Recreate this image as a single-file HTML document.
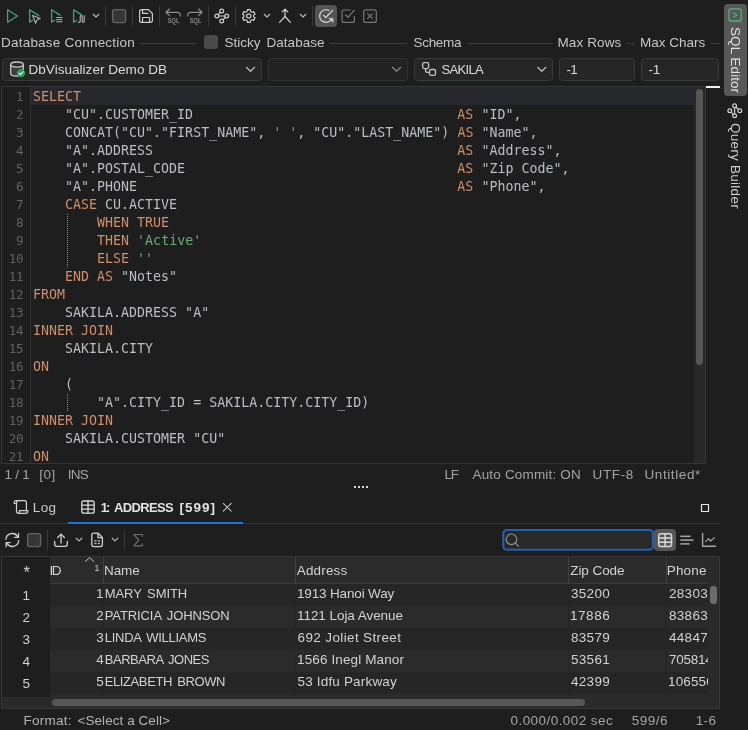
<!DOCTYPE html>
<html><head><meta charset="utf-8">
<style>
*{box-sizing:border-box;margin:0;padding:0}
html,body{width:748px;height:730px;overflow:hidden;background:#1e1e1e;color:#d0d0d0;font-family:"Liberation Sans",sans-serif;font-size:13px}
.abs{position:absolute}
#root{will-change:transform;position:relative;width:748px;height:730px;overflow:hidden;background:#1e1e1e}
.t{position:absolute;white-space:pre;line-height:16px;color:#c8c8c8;font-size:13.500px}
.sepv{position:absolute;width:1px;background:#3a3a3a;top:6px;height:20px}
.lline{position:absolute;height:1px;background:#3c3c3c;top:43px}
.combo{position:absolute;top:58px;height:23px;border:1px solid #3a3a3a;border-radius:3.500px;background:#262626}
#sidebar{position:absolute;left:722px;top:0;width:26px;height:730px}
.vt{position:absolute;writing-mode:vertical-rl;white-space:pre;font-size:14px;color:#d0d0d0;line-height:16px}
#editor{position:absolute;left:1px;top:86px;width:705px;height:378px;background:#1e1e1e;overflow:hidden;border:1px solid #363636}
#gutter{position:absolute;left:0;top:0;width:29px;height:377px;background:#1e1e1e;border-right:1px solid #323232}
pre{font-family:"DejaVu Sans Mono","Liberation Mono",monospace;font-size:13.288px;line-height:18px;position:absolute;white-space:pre}
#ln{left:0;top:1px;width:21.100px;text-align:right;color:#606265;font-size:12.500px;letter-spacing:-0.350px}
#code{left:31px;top:1px;color:#bcbec4;letter-spacing:0.020px}
.gt{position:absolute;white-space:pre;line-height:16px;color:#d4d4d4;font-size:13.500px}
.k{color:#cf8e6d}.s{color:#6aab73}
</style></head><body><div id="root">

<!-- TOOLBAR -->
<div id="toolbar"><svg class="abs" style="left:0;top:0" width="400" height="32" viewBox="0 0 400 32" fill="none" stroke-linecap="round" stroke-linejoin="round">
<g stroke="#44a572" stroke-width="1.3">
<path d="M7.6 9.8 L17.4 16 L7.6 22.2 Z"/>
<path d="M32.400 20.400 L29.600 22.200 L29.600 9.800 L38.800 15.600"/>
<path d="M54.600 20.300 L51.600 22.200 L51.600 9.800 L60 15.100"/>
<path d="M76.600 20.300 L73.600 22.200 L73.600 9.800 L81.600 14.900"/>
</g>
<path d="M32.6 15.6 L40.2 18.6 L36.9 19.9 L35.6 23.2 Z" stroke="#b4b4b4" stroke-width="1.1"/>
<g stroke="#b0b0b0" stroke-width="1" stroke-linecap="butt"><path d="M56.200 17.500 H62.400"/><path d="M56.200 19.650 H62.400"/><path d="M56.200 21.800 H62.400"/></g>
<path d="M78.3 22.3 H79.3 Q80.2 22.3 80.2 21.2 V16.8 Q80.2 15.7 81.2 15.7 Q82.2 15.7 82.2 16.8 V21.2 Q82.2 22.3 83.2 22.3 Q84.2 22.3 84.2 21.2 V15.5" stroke="#a8a8a8" stroke-width="1.2"/>
<path d="M93.2 14.3 L96 17 L98.8 14.3" stroke="#b4b4b4" stroke-width="1.2"/>
<g stroke="#3a3a3a" stroke-width="1"><path d="M105.5 6 V26"/><path d="M132.5 6 V26"/><path d="M159.5 6 V26"/><path d="M208.5 6 V26"/><path d="M235.5 6 V26"/><path d="M312.5 6 V26"/></g>
<rect x="112.6" y="9.6" width="13" height="13" rx="2" fill="#363636" stroke="#626262" stroke-width="1.4"/>
<g stroke="#cccccc" stroke-width="1.2">
<path d="M141.5 9.6 H148.5 L152.4 13.5 V20.5 Q152.4 22.4 150.5 22.4 H141.5 Q139.6 22.4 139.6 20.5 V11.5 Q139.6 9.6 141.5 9.6 Z"/>
<path d="M142.5 9.8 V13.4 H148 "/>
<path d="M142.5 22.2 V17.5 H149.5 V22.2"/>
</g>
<g stroke="#8c8c8c" stroke-width="1.2">
<path d="M169.5 9 L166 12.3 L169.5 15.6"/><path d="M166.3 12.3 H177 Q180.3 12.3 180.3 15.5 V16"/>
<path d="M198.5 9 L202 12.3 L198.5 15.6"/><path d="M201.7 12.3 H191 Q187.7 12.3 187.7 15.5 V16"/>
</g>
<g fill="#8c8c8c" stroke="none" font-family="Liberation Sans, sans-serif" font-size="7.600" font-weight="bold"><text x="167.800" y="22.900" textLength="11.600" lengthAdjust="spacingAndGlyphs">SQL</text><text x="189.800" y="22.900" textLength="11.600" lengthAdjust="spacingAndGlyphs">SQL</text></g>
<g stroke="#d0d0d0" stroke-width="1.2">
<circle cx="221.7" cy="11" r="1.9"/><circle cx="216.9" cy="16" r="1.9"/><circle cx="226.7" cy="16" r="1.9"/><circle cx="221.7" cy="21" r="1.9"/>
<path d="M218.8 16 H224.8"/><path d="M218.2 14.6 L220.3 12.4"/><path d="M225.4 17.4 L223.1 19.6"/>
</g>
<g stroke="#d0d0d0" stroke-width="1.2">
<circle cx="248.8" cy="16" r="2.1"/>
<path d="M247.18 11.27 L247.42 9.54 L250.18 9.54 L250.42 11.27 L252.09 12.23 L253.70 11.58 L255.08 13.96 L253.71 15.04 L253.71 16.96 L255.08 18.04 L253.70 20.42 L252.09 19.77 L250.42 20.73 L250.18 22.46 L247.42 22.46 L247.18 20.73 L245.51 19.77 L243.90 20.42 L242.52 18.04 L243.89 16.96 L243.89 15.04 L242.52 13.96 L243.90 11.58 L245.51 12.23 Z"/>
</g>
<path d="M264.2 14.3 L267 17 L269.8 14.3" stroke="#b4b4b4" stroke-width="1.2"/>
<g stroke="#d0d0d0" stroke-width="1.2"><path d="M282.200 11.900 L285 9.200 L287.800 11.900"/><path d="M285 9.5 V16.5"/><path d="M279.6 22.4 L285 16.5 L290.4 22.4"/></g>
<path d="M300.2 14.3 L303 17 L305.8 14.3" stroke="#b4b4b4" stroke-width="1.2"/>
<rect x="315" y="5" width="22" height="22" rx="3.500" fill="#555555"/>
<g stroke="#d6d6d6" stroke-width="1.2">
<path d="M328.700 10.400 A6.300 6.300 0 1 0 330.600 20.300"/>
<path d="M323.600 15.400 L325.800 17.500 L332.800 10.200"/>
</g>
<path d="M328.800 18.200 L333.100 18.200 L333.100 22.500 Z" fill="#d4d4d4" stroke="#d4d4d4" stroke-width="0.300"/>
<g stroke="#777777" stroke-width="1.2">
<path d="M354.4 16.5 V20.4 Q354.4 22.4 352.4 22.4 H344 Q342 22.4 342 20.4 V12 Q342 10 344 10 H350.5"/>
<path d="M345.6 15 L348 17.3 L354.3 10.2"/>
<rect x="363.7" y="9.8" width="12.6" height="12.6" rx="2"/>
<path d="M367.7 13.8 L372.3 18.4"/><path d="M372.3 13.8 L367.7 18.4"/>
</g>
</svg></div>

<!-- LABEL ROW -->
<div class="lline" style="left:139px;width:58px"></div>
<div class="abs" style="left:204px;top:35px;width:14px;height:14px;background:#4a4a4a;border-radius:3px"></div>
<div class="lline" style="left:329px;width:78px"></div>
<div class="lline" style="left:467px;width:86px"></div>
<div class="lline" style="left:626px;width:9px"></div>
<div class="lline" style="left:711px;width:9px"></div>

<!-- COMBOS -->
<div class="combo" style="left:2px;width:260px"></div>
<div class="combo" style="left:268px;width:140px;background:#222222;border-color:#333333"></div>
<div class="combo" style="left:414px;width:139px"></div>
<div class="combo" style="left:559px;width:76px"></div>
<div class="combo" style="left:641px;width:78px"></div>
<svg class="abs" style="left:0;top:56px" width="722" height="28" viewBox="0 56 722 28" fill="none" stroke-linecap="round" stroke-linejoin="round">
<path d="M10.700 64.600 V73.400 A6.300 2.600 0 0 0 23.300 73.400 V64.600" fill="#3a3a3a" stroke="#c4c4c4" stroke-width="1.3"/>
<ellipse cx="17" cy="64.600" rx="6.300" ry="2.600" fill="#2e2e2e" stroke="#c4c4c4" stroke-width="1.3"/>
<circle cx="21" cy="73.100" r="4.200" fill="#1fa055"/>
<path d="M18.900 73.200 L20.400 74.700 L23.100 71.800" stroke="#ffffff" stroke-width="1.2"/>
<g stroke="#bdbdbd" stroke-width="1.2">
<path d="M246.400 67.300 L250.500 71.300 L254.600 67.300"/>
<path d="M392.400 67.300 L396.500 71.300 L400.600 67.300" stroke="#8a8a8a"/>
<path d="M537.700 67.300 L541.800 71.300 L545.900 67.300"/>
</g>
<g stroke="#c4c4c4" stroke-width="1.3">
<rect x="422.700" y="62.700" width="5.900" height="5.900" rx="1.500"/>
<rect x="429.600" y="69.500" width="5.900" height="5.900" rx="1.500"/>
<path d="M425.600 68.800 V70.400 Q425.600 72.400 427.600 72.400 H429.400"/>
</g>
</svg>
<div class="t" style="left:1.00px;top:34.50px;color:#c6c6c6;letter-spacing:0.218px">Database Connection</div>
<div class="t" style="left:224.50px;top:34.50px;color:#c6c6c6;letter-spacing:-0.001px">Sticky</div>
<div class="t" style="left:266.50px;top:34.50px;color:#c6c6c6;letter-spacing:0.031px">Database</div>
<div class="t" style="left:413.50px;top:34.50px;color:#c6c6c6;letter-spacing:-0.303px">Schema</div>
<div class="t" style="left:557.50px;top:34.50px;color:#c6c6c6;letter-spacing:0.106px">Max Rows</div>
<div class="t" style="left:640.00px;top:34.50px;color:#c6c6c6;letter-spacing:-0.002px">Max Chars</div>
<div class="t" style="left:28.50px;top:61.50px;color:#dadada;letter-spacing:0.037px">DbVisualizer Demo DB</div>
<div class="t" style="left:441.50px;top:61.50px;color:#dadada;letter-spacing:-0.671px;font-size:13px">SAKILA</div>
<div class="t" style="left:566.50px;top:61.50px;color:#dadada;letter-spacing:-0.746px">-1</div>
<div class="t" style="left:648.50px;top:61.50px;color:#dadada;letter-spacing:-0.246px">-1</div>
<div class="t" style="left:4.50px;top:466.50px;color:#a4a4a4;letter-spacing:-0.253px">1 / 1</div>
<div class="t" style="left:39.25px;top:466.50px;color:#a4a4a4;letter-spacing:0.496px">[0]</div>
<div class="t" style="left:67.75px;top:466.50px;color:#a4a4a4;letter-spacing:-0.750px">INS</div>
<div class="t" style="left:444.50px;top:466.50px;color:#a4a4a4;letter-spacing:-1.258px">LF</div>
<div class="t" style="left:472.50px;top:466.50px;color:#a4a4a4;letter-spacing:0.177px">Auto Commit: ON</div>
<div class="t" style="left:592.50px;top:466.50px;color:#a4a4a4;letter-spacing:0.628px">UTF-8</div>
<div class="t" style="left:644.50px;top:466.50px;color:#a4a4a4;letter-spacing:0.591px">Untitled*</div>
<div class="t" style="left:32.75px;top:499.50px;color:#cccccc;letter-spacing:0.367px">Log</div>
<div class="t" style="left:100.80px;top:499.50px;color:#e2e2e2;letter-spacing:-2.030px;font-weight:bold;font-size:13px">1:</div>
<div class="t" style="left:113.90px;top:499.50px;color:#e2e2e2;letter-spacing:-0.616px;font-weight:bold;font-size:13px">ADDRESS</div>
<div class="t" style="left:179.50px;top:499.50px;color:#e2e2e2;letter-spacing:0.995px;font-weight:bold">[599]</div>
<div class="t" style="left:23.50px;top:712.50px;color:#b4b4b4;letter-spacing:0.249px">Format:</div>
<div class="t" style="left:77.50px;top:712.50px;color:#b4b4b4;letter-spacing:0.059px">&lt;Select a Cell&gt;</div>
<div class="t" style="left:510.50px;top:712.50px;color:#a4a4a4;letter-spacing:0.441px">0.000/0.002 sec</div>
<div class="t" style="left:631.75px;top:712.50px;color:#a4a4a4;letter-spacing:0.494px">599/6</div>
<div class="t" style="left:695.70px;top:712.50px;color:#a4a4a4;letter-spacing:0.348px">1-6</div>
<!-- EDITOR -->
<div id="editor">
<div class="abs" style="left:28px;top:0;width:664px;height:18px;background:#26282e"></div>
<div class="abs" style="left:692px;top:0;width:11px;height:376px;background:#282828"></div>
<div class="abs" style="left:694px;top:1.500px;width:7px;height:276.500px;background:#555555;border-radius:3.500px"></div>
<div id="gutter"></div>
<div class="abs" style="left:65px;top:127px;width:1px;height:54px;background:repeating-linear-gradient(to bottom,#8c8c8c 0,#8c8c8c 1px,transparent 1px,transparent 2px)"></div>
<div class="abs" style="left:65px;top:307px;width:1px;height:18px;background:repeating-linear-gradient(to bottom,#8c8c8c 0,#8c8c8c 1px,transparent 1px,transparent 2px)"></div>
<pre id="ln">1
2
3
4
5
6
7
8
9
10
11
12
13
14
15
16
17
18
19
20
21</pre>
<pre id="code"><span class="k">SELECT</span>
    "CU".CUSTOMER_ID                                 <span class="k">AS</span> "ID",
    CONCAT("CU"."FIRST_NAME", <span class="s">' '</span>, "CU"."LAST_NAME") <span class="k">AS</span> "Name",
    "A".ADDRESS                                      <span class="k">AS</span> "Address",
    "A".POSTAL_CODE                                  <span class="k">AS</span> "Zip Code",
    "A".PHONE                                        <span class="k">AS</span> "Phone",
    <span class="k">CASE</span> CU.ACTIVE
        <span class="k">WHEN TRUE</span>
        <span class="k">THEN</span> <span class="s">'Active'</span>
        <span class="k">ELSE</span> <span class="s">''</span>
    <span class="k">END AS</span> "Notes"
<span class="k">FROM</span>
    SAKILA.ADDRESS "A"
<span class="k">INNER JOIN</span>
    SAKILA.CITY
<span class="k">ON</span>
    (
        "A".CITY_ID = SAKILA.CITY.CITY_ID)
<span class="k">INNER JOIN</span>
    SAKILA.CUSTOMER "CU"
<span class="k">ON</span></pre>
</div>

<div class="abs" style="left:706px;top:86px;width:14px;height:2px;background:#f0f0f0"></div>
<!-- SIDEBAR -->
<div class="abs" style="left:724px;top:4px;width:23px;height:92px;background:#585858;border-radius:4px"></div>
<svg class="abs" style="left:722px;top:0" width="26" height="125" viewBox="722 0 26 125" fill="none" stroke-linecap="round" stroke-linejoin="round">
<rect x="729" y="8.800" width="12.200" height="12.200" rx="2.200" stroke="#4fb27f" stroke-width="1.3"/>
<path d="M733.300 12.700 L736.900 15 L733.300 17.300" stroke="#4fb27f" stroke-width="1.2"/>
<g stroke="#d0d0d0" stroke-width="1.2">
<circle cx="734.600" cy="105.800" r="1.900"/><circle cx="729.800" cy="110.800" r="1.900"/><circle cx="739.800" cy="110.800" r="1.900"/><circle cx="734.600" cy="115.800" r="1.900"/>
<path d="M734.600 107.700 V113.900"/><path d="M738.500 109.400 L736 107.200"/><path d="M731.100 112.200 L733.300 114.400"/>
</g>
</svg>
<div class="t" id="vt1" style="left:743.200px;top:27.300px;transform-origin:0 0;transform:rotate(90deg);color:#e0e0e0;letter-spacing:0.060px">SQL Editor</div>
<div class="t" id="vt2" style="left:743.200px;top:122.600px;transform-origin:0 0;transform:rotate(90deg);color:#d0d0d0;letter-spacing:0.260px">Query Builder</div>

<!-- STATUS -->

<div class="abs" style="left:354px;top:486px;width:2px;height:2px;background:#dcdcdc"></div><div class="abs" style="left:358px;top:486px;width:2px;height:2px;background:#dcdcdc"></div><div class="abs" style="left:362px;top:486px;width:2px;height:2px;background:#dcdcdc"></div><div class="abs" style="left:366px;top:486px;width:2px;height:2px;background:#dcdcdc"></div>
<!-- TABS -->

<svg class="abs" style="left:0;top:495px" width="722" height="60" viewBox="0 495 722 60" fill="none" stroke-linecap="round" stroke-linejoin="round">
<g stroke="#d0d0d0" stroke-width="1.2">
<path d="M16.5 503.5 V502.5 Q16.500 500.600 18.400 500.600 H24.500 Q26.400 500.600 26.400 502.500 V510.700"/>
<path d="M16.500 503.500 H14.300 V502.600 Q14.300 500.600 16.400 500.600 H18.5"/>
<path d="M16.500 503.500 V511.200 Q16.500 513.300 18.500 513.300 H25.800 Q27.800 513.300 27.800 511.300 V510.700 H19.4 V511.4 Q19.4 513.3 18.2 513.3"/>
</g>
<g stroke="#d8d8d8" stroke-width="1.3">
<rect x="81.800" y="501" width="12.400" height="12.200" rx="2"/>
<path d="M88 501 V513.200"/><path d="M81.800 505.100 H94.200"/><path d="M81.800 509.200 H94.200"/>
</g>
<g stroke="#c0c0c0" stroke-width="1.1"><path d="M223.300 503.300 L231.200 511.200"/><path d="M231.200 503.300 L223.300 511.200"/></g>
<rect x="701.500" y="504.500" width="7" height="7" stroke="#e6e6e6" stroke-width="1.2"/>
<rect x="0" y="523" width="720" height="1" fill="#343434"/>
<rect x="68" y="522" width="175" height="2" fill="#1f70d0"/>
<!-- grid toolbar -->
<g stroke="#d0d0d0" stroke-width="1.3">
<path d="M5.900 539.300 A6.400 6.400 0 0 1 17.700 536.600"/><path d="M18.500 533.300 V537.300 H14.500"/>
<path d="M18.700 540.700 A6.400 6.400 0 0 1 6.900 543.400"/><path d="M6.100 546.700 V542.700 H10.100"/>
</g>
<rect x="27.600" y="533.600" width="13" height="13" rx="2" fill="#363636" stroke="#626262" stroke-width="1.4"/>
<path d="M47.500 530 V550" stroke="#3a3a3a"/><path d="M124.500 530 V550" stroke="#3a3a3a"/>
<g stroke="#d0d0d0" stroke-width="1.3">
<path d="M54.700 541.500 V544.300 Q54.700 546.300 56.700 546.300 H65.300 Q67.300 546.300 67.300 544.300 V541.500"/>
<path d="M61 543 V534.300"/><path d="M57.600 537.500 L61 534.100 L64.400 537.500"/>
</g>
<path d="M76.200 538.200 L79 540.900 L81.800 538.200" stroke="#b4b4b4" stroke-width="1.2"/>
<g stroke="#d0d0d0" stroke-width="1.3">
<path d="M93.800 533.200 H98.200 L102.400 537.400 V544.600 Q102.400 546.600 100.400 546.600 H93.800 Q91.800 546.600 91.800 544.600 V535.200 Q91.800 533.200 93.800 533.200 Z"/>
<path d="M98 533.400 V537.600 H102.200"/>
</g>
<g fill="#c4c4c4"><rect x="94.300" y="540.300" width="2.200" height="1.300"/><rect x="97.700" y="540.300" width="2.200" height="1.300"/><rect x="94.300" y="542.900" width="2.200" height="1.300"/><rect x="97.700" y="542.900" width="2.200" height="1.300"/></g>
<path d="M112.200 538.200 L115 540.900 L117.800 538.200" stroke="#b4b4b4" stroke-width="1.2"/>
<path d="M142.200 536.300 V534.500 H133.800 L138.800 540.200 L133.800 545.900 H142.200 V544.100" stroke="#6e6e6e" stroke-width="1.2"/>
<!-- search -->
<rect x="503.300" y="530" width="149.600" height="19.700" rx="3.500" fill="#292929" stroke="#2161b2" stroke-width="2"/>
<circle cx="511.500" cy="539.300" r="5.300" stroke="#8e8e8e" stroke-width="1.2"/><path d="M515.400 543.200 L518.400 546.200" stroke="#8e8e8e" stroke-width="1.2"/>
<rect x="654" y="529" width="22" height="22" rx="4" fill="#565656"/>
<g stroke="#dadada" stroke-width="1.500">
<rect x="658.700" y="533.700" width="12.800" height="12.700" rx="2"/>
<path d="M665.100 533.700 V546.400"/><path d="M658.700 537.900 H671.500"/><path d="M658.700 542.200 H671.500"/>
</g>
<g stroke="#a6a6a6" stroke-width="1.500" stroke-linecap="butt"><path d="M680.300 536.300 H690.500"/><path d="M680.300 540.100 H693.600"/><path d="M680.300 543.900 H689.600"/></g>
<g stroke="#a6a6a6" stroke-width="1.400"><path d="M702.600 533.400 V546.200 H715.400"/><path d="M705.700 541.600 L708.500 538.700 L710.600 541 L714.500 537.600" stroke-width="1.2"/></g>
</svg>
<!-- GRID -->
<div id="grid" class="abs" style="left:1px;top:556px;width:719px;height:153px;border:1px solid #383838;background:#2a2a2a;overflow:hidden">
<div class="abs" style="left:48px;top:0px;width:658px;height:26px;background:#2b2b2b;"></div>
<div class="abs" style="left:48px;top:26px;width:658px;height:1px;background:#3c3c3c;"></div>
<div class="abs" style="left:48px;top:27px;width:658px;height:22px;background:#262626;"></div>
<div class="abs" style="left:48px;top:49px;width:658px;height:22px;background:#2b2b2b;"></div>
<div class="abs" style="left:48px;top:71px;width:658px;height:22px;background:#262626;"></div>
<div class="abs" style="left:48px;top:93px;width:658px;height:22px;background:#2b2b2b;"></div>
<div class="abs" style="left:48px;top:115px;width:658px;height:22px;background:#262626;"></div>
<div class="abs" style="left:48px;top:137px;width:658px;height:3px;background:#2b2b2b;"></div>
<div class="abs" style="left:0px;top:0px;width:48px;height:140px;background:#1e1e1e;"></div>
<div class="abs" style="left:101px;top:0px;width:1px;height:26px;background:#404040;"></div>
<div class="abs" style="left:101px;top:27px;width:1px;height:113px;background:#252525;"></div>
<div class="abs" style="left:293px;top:0px;width:1px;height:26px;background:#404040;"></div>
<div class="abs" style="left:293px;top:27px;width:1px;height:113px;background:#252525;"></div>
<div class="abs" style="left:566px;top:0px;width:1px;height:26px;background:#404040;"></div>
<div class="abs" style="left:566px;top:27px;width:1px;height:113px;background:#252525;"></div>
<div class="abs" style="left:664px;top:0px;width:1px;height:26px;background:#404040;"></div>
<div class="abs" style="left:664px;top:27px;width:1px;height:113px;background:#252525;"></div>
<div class="gt" style="left:21.40px;top:6.50px;color:#d2d2d2;letter-spacing:0.000px;font-size:16.5px">*</div>
<div class="gt" style="left:47.60px;top:5.50px;color:#d2d2d2;letter-spacing:-1.551px">ID</div>
<div class="gt" style="left:102.00px;top:5.50px;color:#d2d2d2;letter-spacing:-0.084px">Name</div>
<div class="gt" style="left:294.75px;top:5.50px;color:#d2d2d2;letter-spacing:0.163px">Address</div>
<div class="gt" style="left:568.25px;top:5.50px;color:#d2d2d2;letter-spacing:-0.074px">Zip Code</div>
<div class="gt" style="left:664.75px;top:5.50px;color:#d2d2d2;letter-spacing:0.180px">Phone</div>
<div class="gt" style="left:20.40px;top:30.50px;color:#d2d2d2;letter-spacing:0.000px">1</div>
<div class="gt" style="left:93.90px;top:28.50px;color:#d2d2d2;letter-spacing:0.000px">1</div>
<div class="gt" style="left:102.75px;top:28.50px;color:#d2d2d2;letter-spacing:-0.082px;font-size:13px;word-spacing:2.0px">MARY SMITH</div>
<div class="gt" style="left:295.00px;top:28.50px;color:#d2d2d2;letter-spacing:-0.158px">1913 Hanoi Way</div>
<div class="gt" style="left:569.00px;top:28.50px;color:#d2d2d2;letter-spacing:0.304px">35200</div>
<div class="gt" style="left:667.00px;top:28.50px;color:#d2d2d2;letter-spacing:0.304px">28303</div>
<div class="gt" style="left:20.60px;top:52.50px;color:#d2d2d2;letter-spacing:0.000px">2</div>
<div class="gt" style="left:94.20px;top:50.50px;color:#d2d2d2;letter-spacing:0.000px">2</div>
<div class="gt" style="left:102.75px;top:50.50px;color:#d2d2d2;letter-spacing:-0.104px;font-size:13px;word-spacing:2.0px">PATRICIA JOHNSON</div>
<div class="gt" style="left:295.00px;top:50.50px;color:#d2d2d2;letter-spacing:-0.056px">1121 Loja Avenue</div>
<div class="gt" style="left:568.00px;top:50.50px;color:#d2d2d2;letter-spacing:0.554px">17886</div>
<div class="gt" style="left:667.00px;top:50.50px;color:#d2d2d2;letter-spacing:0.304px">83863</div>
<div class="gt" style="left:20.60px;top:74.50px;color:#d2d2d2;letter-spacing:0.000px">3</div>
<div class="gt" style="left:94.20px;top:72.50px;color:#d2d2d2;letter-spacing:0.000px">3</div>
<div class="gt" style="left:102.75px;top:72.50px;color:#d2d2d2;letter-spacing:-0.277px;font-size:13px;word-spacing:2.0px">LINDA WILLIAMS</div>
<div class="gt" style="left:295.50px;top:72.50px;color:#d2d2d2;letter-spacing:0.371px">692 Joliet Street</div>
<div class="gt" style="left:569.00px;top:72.50px;color:#d2d2d2;letter-spacing:0.304px">83579</div>
<div class="gt" style="left:667.00px;top:72.50px;color:#d2d2d2;letter-spacing:0.304px">44847</div>
<div class="gt" style="left:20.60px;top:96.50px;color:#d2d2d2;letter-spacing:0.000px">4</div>
<div class="gt" style="left:94.20px;top:94.50px;color:#d2d2d2;letter-spacing:0.000px">4</div>
<div class="gt" style="left:102.75px;top:94.50px;color:#d2d2d2;letter-spacing:-0.472px;font-size:13px;word-spacing:2.0px">BARBARA JONES</div>
<div class="gt" style="left:295.00px;top:94.50px;color:#d2d2d2;letter-spacing:0.128px">1566 Inegl Manor</div>
<div class="gt" style="left:569.00px;top:94.50px;color:#d2d2d2;letter-spacing:0.304px">53561</div>
<div class="gt" style="left:667.00px;top:94.50px;color:#d2d2d2;letter-spacing:-0.268px">705814</div>
<div class="gt" style="left:20.60px;top:118.50px;color:#d2d2d2;letter-spacing:0.000px">5</div>
<div class="gt" style="left:94.20px;top:116.50px;color:#d2d2d2;letter-spacing:0.000px">5</div>
<div class="gt" style="left:102.75px;top:116.50px;color:#d2d2d2;letter-spacing:-0.400px;font-size:13px;word-spacing:2.0px">ELIZABETH BROWN</div>
<div class="gt" style="left:295.50px;top:116.50px;color:#d2d2d2;letter-spacing:0.175px">53 Idfu Parkway</div>
<div class="gt" style="left:569.00px;top:116.50px;color:#d2d2d2;letter-spacing:0.304px">42399</div>
<div class="gt" style="left:666.00px;top:116.50px;color:#d2d2d2;letter-spacing:0.132px">106550</div>
<div class="abs" style="left:706px;top:0px;width:12px;height:151px;background:#2a2a2a;"></div>
<div class="abs" style="left:708.300px;top:29px;width:6.500px;height:17.500px;background:#6c6c6c;border-radius:3.250px"></div>
<div class="abs" style="left:50px;top:142.200px;width:533px;height:6.600px;background:#565656;border-radius:3.300px"></div>
<svg class="abs" style="left:82px;top:0" width="18" height="16" viewBox="84 557 18 16" fill="none"><path d="M85.300 561.600 L89.600 557.600 L93.900 561.600" stroke="#c8c8c8" stroke-width="1"/><text x="94.300" y="570.500" font-family="Liberation Sans, sans-serif" font-size="9.600" fill="#c0c0c0">1</text></svg>
</div>

<!-- BOTTOM STATUS -->

</div></body></html>
